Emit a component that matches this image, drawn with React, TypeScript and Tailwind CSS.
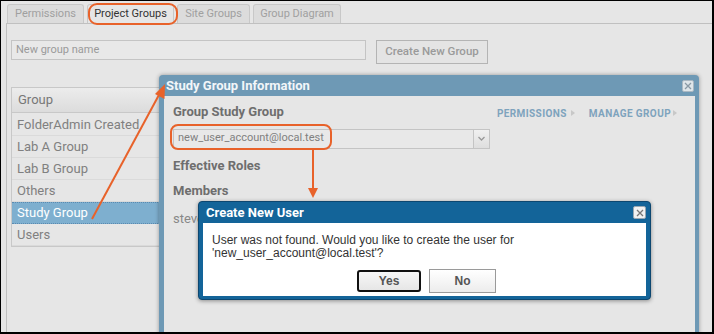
import React from "react";

const rows = ["FolderAdmin Created", "Lab A Group", "Lab B Group", "Others", "Study Group", "Users"];

export default function App() {
  return (
    <div
      className="relative w-[714px] h-[334px] overflow-hidden bg-[#e6e6e6] border-l border-t border-r-2 border-b-2 border-black"
      style={{ fontFamily: "Roboto, 'Liberation Sans', sans-serif" }}
    >
      {/* tabs */}
      <div className="flex items-end gap-[3px] pl-[6px] pt-[3px] h-[22px]">
        <div className="h-[19px] w-[77px] flex items-center justify-center border border-b-0 border-[#c8c8c8] rounded-t-[3px] bg-[#dcdcdc] text-[11px] text-[#a0a0a0]">Permissions</div>
        <div className="h-[19px] w-[87px] flex items-center justify-center border border-b-0 border-[#c8c8c8] rounded-t-[3px] bg-[#e6e6e6] text-[11px] text-[#333]">Project Groups</div>
        <div className="h-[19px] w-[73px] flex items-center justify-center border border-b-0 border-[#c8c8c8] rounded-t-[3px] bg-[#dcdcdc] text-[11px] text-[#a0a0a0]">Site Groups</div>
        <div className="h-[19px] w-[88px] flex items-center justify-center border border-b-0 border-[#c8c8c8] rounded-t-[3px] bg-[#dcdcdc] text-[11px] text-[#a0a0a0]">Group Diagram</div>
      </div>
      {/* content panel */}
      <div className="ml-[5px] h-[320px] border-l border-t border-[#c0c0c0] pl-[4px] pt-[16px]">
        <div className="flex items-start gap-[10px]">
          <div className="w-[355px] h-[20px] border border-[#c4c4c4] bg-[#e8e8e8] flex items-center px-[4px] text-[11px] text-[#9a9a9a]">New group name</div>
          <div className="w-[112px] h-[24px] border border-[#b4b4b4] bg-[#e4e4e4] flex items-center justify-center text-[11.5px] font-medium text-[#9a9a9a]">Create New Group</div>
        </div>
        <div className="mt-[23px] w-[240px] border border-[#c8c8c8]">
          <div className="h-[25px] flex items-center px-[6px] text-[13px] text-[#777] bg-gradient-to-b from-[#ececec] to-[#dcdcdc] border-b border-[#c8c8c8]">Group</div>
          <div className="pt-[1px]">
            {rows.map((r) => (
              <div
                key={r}
                className={
                  r === "Study Group"
                    ? "h-[22px] flex items-center px-[5px] text-[13px] text-white bg-[#7eafcf] border-y border-dotted border-[#5a8ab0]"
                    : "h-[22px] flex items-center px-[5px] text-[13px] text-[#808080] border-b border-[#dadada]"
                }
              >
                {r}
              </div>
            ))}
          </div>
        </div>
      </div>

      {/* Study Group Information dialog */}
      <div className="absolute left-[158px] top-[74px] w-[540px] h-[270px] bg-[#6e99b5] rounded-t-[4px] shadow-[0_0_4px_rgba(0,0,0,0.35)] flex flex-col">
        <div className="h-[21px] flex items-center justify-between pl-[7px] pr-[5px]">
          <span className="text-[13px] font-bold text-[#f2f6f9]">Study Group Information</span>
          <span className="w-[12px] h-[12px] bg-[#dfe6ea] border border-[#aab8c2] rounded-[2px] flex items-center justify-center">
            <svg width="8" height="8" viewBox="0 0 8 8"><path d="M1 1L7 7M7 1L1 7" stroke="#8a9aa5" strokeWidth="1.3" /></svg>
          </span>
        </div>
        <div className="flex-1 ml-[5px] mr-[4px] bg-[#e6e6e6] px-[9px] pt-[6px] relative">
          <div className="flex items-center justify-between pr-[9px]">
            <span className="text-[13px] font-bold text-[#6e6e6e]">Group Study Group</span>
            <div className="flex items-center gap-[14px] pt-[3px] text-[10px] font-bold text-[#7ea3bd] tracking-[0.4px]">
              <span className="flex items-center gap-[4px]">PERMISSIONS<svg width="4" height="6" viewBox="0 0 4 6"><path d="M0 0L4 3L0 6Z" fill="#c8c8c8" /></svg></span>
              <span className="flex items-center gap-[2px]">MANAGE GROUP<svg width="4" height="6" viewBox="0 0 4 6"><path d="M0 0L4 3L0 6Z" fill="#c8c8c8" /></svg></span>
            </div>
          </div>
          <div className="mt-[7px] w-[317px] h-[20px] border border-[#c4c4c4] bg-[#e8e8e8] flex items-center">
            <span className="flex-1 px-[4px] text-[11px] text-[#808080]">new_user_account@local.test</span>
            <span className="w-[16px] h-full border-l border-[#c4c4c4] bg-gradient-to-b from-[#f0f0f0] to-[#dedede] flex items-center justify-center">
              <svg width="7" height="5" viewBox="0 0 7 5"><path d="M0.5 1L3.5 4L6.5 1" stroke="#999" strokeWidth="1.3" fill="none" /></svg>
            </span>
          </div>
          <div className="mt-[7px] text-[13px] font-bold text-[#6e6e6e]">Effective Roles</div>
          <div className="mt-[6px] text-[13px] font-bold text-[#6e6e6e]">Members</div>
          <div className="mt-[8px] text-[13px] text-[#888]">steve</div>
        </div>
      </div>

      {/* Create New User dialog */}
      <div
        className="absolute left-[197px] top-[200px] w-[453px] h-[99px] bg-[#136499] border border-[#0d4770] rounded-[4px] shadow-[0_1px_4px_rgba(0,0,0,0.4)] flex flex-col"
      >
        <div className="h-[21px] flex items-center justify-between pl-[7px] pr-[4px]">
          <span className="text-[13px] font-bold text-white">Create New User</span>
          <span className="w-[13px] h-[13px] bg-[#f2f2f2] border border-[#9aa8b2] rounded-[2px] flex items-center justify-center">
            <svg width="8" height="8" viewBox="0 0 8 8"><path d="M1 1L7 7M7 1L1 7" stroke="#777" strokeWidth="1.3" /></svg>
          </span>
        </div>
        <div className="flex-1 mx-[4px] mb-[3px] bg-white px-[9px] pt-[11px]" style={{ fontFamily: "'Liberation Sans', Arial, sans-serif" }}>
          <div className="text-[12px] leading-[13px] text-[#333]">
            User was not found. Would you like to create the user for
            <br />'new_user_account@local.test'?
          </div>
          <div className="mt-[10px] flex justify-end gap-[8px] pr-[141px]">
            <div className="w-[64px] h-[22px] border-2 border-[#111] rounded-[3px] bg-gradient-to-b from-[#f7f7f7] to-[#e6e6e6] flex items-center justify-center text-[12px] font-bold text-[#555]">Yes</div>
            <div className="w-[67px] h-[24px] -mt-[1px] border border-[#9a9a9a] bg-gradient-to-b from-[#ffffff] to-[#ececec] flex items-center justify-center text-[12px] font-bold text-[#555]">No</div>
          </div>
        </div>
      </div>

      {/* annotation overlays */}
      <div className="absolute left-[87px] top-[2px] w-[90px] h-[22px] border-2 border-[#e8622a] rounded-[9px]" />
      <div className="absolute left-[169px] top-[123px] w-[162px] h-[26px] border-2 border-[#e8622a] rounded-[8px]" />
      <svg className="absolute left-0 top-0 pointer-events-none" width="714" height="334" viewBox="0 0 714 334">
        <line x1="91" y1="218" x2="159" y2="92" stroke="#e8622a" strokeWidth="2" />
        <path d="M164 83L163.5 98L154 93Z" fill="#e8622a" />
        <line x1="312" y1="149" x2="312" y2="188" stroke="#e8622a" strokeWidth="2" />
        <path d="M307 187L317 187L312 197Z" fill="#e8622a" />
      </svg>
    </div>
  );
}
